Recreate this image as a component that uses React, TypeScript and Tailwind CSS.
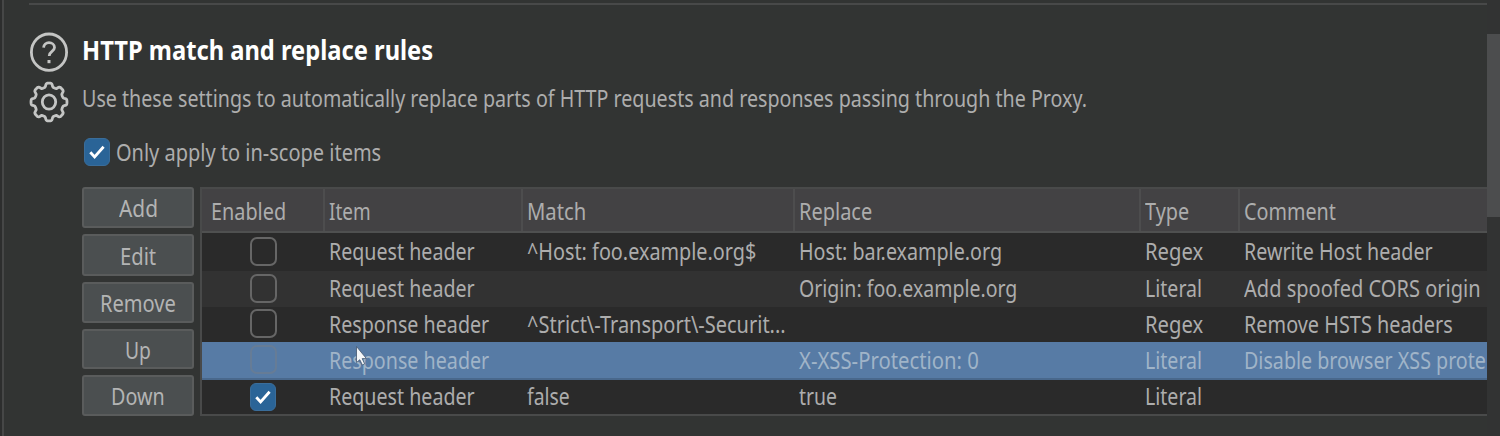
import { useLayoutEffect, useRef, useState } from "react";
import type { ReactNode } from "react";

/* A single line of text, condensed horizontally to a given width. */
function Fit({ children, w, className = "" }: { children: string; w: number; className?: string }) {
  const ref = useRef<HTMLSpanElement>(null);
  const [scale, setScale] = useState(1);
  useLayoutEffect(() => {
    if (ref.current) setScale(w / ref.current.offsetWidth);
  }, [w]);
  return (
    <span className="block whitespace-nowrap" style={{ width: w }}>
      <span
        ref={ref}
        className={"inline-block origin-left " + className}
        style={{ transform: `scaleX(${scale})` }}
      >
        {children}
      </span>
    </span>
  );
}

function Check({ state }: { state: "on" | "off" | "dim" }) {
  if (state === "on") {
    return (
      <span className="flex h-7 w-[26px] items-center justify-center rounded-md border border-[#3a6d9a] bg-[#2a6497]">
        <svg width="18" height="18" viewBox="0 0 18 18" fill="none" stroke="#fff" strokeWidth="2.8">
          <path d="M2.3 9.3 6.6 14 15.6 3.8" />
        </svg>
      </span>
    );
  }
  return (
    <span
      className={
        "block h-[29px] w-[27px] rounded-[7px] border-2 " +
        (state === "dim" ? "border-[#667c96]" : "border-[#666666]")
      }
    />
  );
}

/* Outline of an eight-toothed gear centred on (20, 21). */
const gearPath =
  "M" +
  Array.from({ length: 160 }, (_, i) => {
    const a = (i / 160) * Math.PI * 2;
    const r = 16.2 + 1.8 * Math.tanh(2.4 * Math.cos(8 * a) + 0.2);
    return `${(20 + r * Math.cos(a)).toFixed(2)} ${(21 + r * 1.05 * Math.sin(a)).toFixed(2)}`;
  }).join("L") +
  "Z";

type Cell = [string, number] | null;

const columns: [string, number][] = [
  ["Item", 42],
  ["Match", 59],
  ["Replace", 73],
  ["Type", 44],
  ["Comment", 92],
];

const rows: { state: "on" | "off" | "dim"; look: string; pad: string; cells: Cell[] }[] = [
  {
    state: "off",
    look: "h-[38px] bg-[#2a2a2a]",
    pad: "pb-0.5",
    cells: [["Request header", 146], ["^Host: foo.example.org$", 229], ["Host: bar.example.org", 203], ["Regex", 58], ["Rewrite Host header", 189]],
  },
  {
    state: "off",
    look: "h-9 bg-[#323232]",
    pad: "pb-[3px]",
    cells: [["Request header", 146], null, ["Origin: foo.example.org", 218], ["Literal", 57], ["Add spoofed CORS origin", 237]],
  },
  {
    state: "off",
    look: "h-[35px] bg-[#2a2a2a]",
    pad: "pb-0.5",
    cells: [["Response header", 160], ["^Strict\\-Transport\\-Securit...", 259], null, ["Regex", 58], ["Remove HSTS headers", 209]],
  },
  {
    state: "dim",
    look: "h-[38px] border-b-2 border-[#49688c] bg-[#577ba5] text-[#a0b4c8]",
    pad: "",
    cells: [["Response header", 160], null, ["X-XSS-Protection: 0", 180], ["Literal", 57], ["Disable browser XSS prote", 242]],
  },
  {
    state: "on",
    look: "h-[34px] bg-[#2a2a2a]",
    pad: "pb-[3px]",
    cells: [["Request header", 146], ["false", 43], ["true", 38], ["Literal", 57], null],
  },
];

const buttons: [string, number, string][] = [
  ["Add", 39, "h-[41px]"],
  ["Edit", 36, "h-[42px]"],
  ["Remove", 76, "h-[41px]"],
  ["Up", 26, "h-10"],
  ["Down", 54, "h-[41px]"],
];

const grid = "grid grid-cols-[123px_198px_272px_346px_99px_247px]";

function Icon({ children }: { children: ReactNode }) {
  return (
    <svg width="40" height="42" viewBox="0 0 40 42" fill="none" stroke="#c4c5c4" strokeWidth="2.8" strokeLinejoin="round">
      {children}
    </svg>
  );
}

export default function App() {
  return (
    <div className="relative flex h-[436px] w-[1500px] overflow-hidden bg-[#323433] font-['Noto_Sans',sans-serif] text-[23px] leading-[32px] text-[#adadad]">
      <div className="w-1 shrink-0 border-r-2 border-[#464747] bg-[#2d2e2e]" />
      <main className="w-[1483px] shrink-0 pl-[25px] pt-[3px]">
        <div className="h-0.5 bg-[#484949]" />
        <section className="flex pt-[25px]">
          <div className="flex w-[53px] shrink-0 flex-col gap-2 pt-px">
            <Icon>
              <ellipse cx="20" cy="21.2" rx="17.6" ry="18.2" />
              <path d="M14.6 16.6c.2-3 2.5-4.9 5.4-4.9s5.5 1.9 5.5 4.8c0 4-5.3 3.8-5.3 8.4" />
              <path d="M20 29v3.2" strokeWidth="3" />
            </Icon>
            <Icon>
              <path d={gearPath} />
              <ellipse cx="20" cy="21" rx="6.7" ry="7.2" />
            </Icon>
          </div>
          <div className="w-[1405px] shrink-0">
            <h1 className="mt-1 text-[26px] leading-[32px] font-bold text-white">
              <Fit w={351}>HTTP match and replace rules</Fit>
            </h1>
            <p className="mt-4">
              <Fit w={1005}>
                Use these settings to automatically replace parts of HTTP requests and responses passing through the Proxy.
              </Fit>
            </p>
            <label className="mt-[22px] flex items-center gap-1.5 pl-0.5">
              <Check state="on" />
              <Fit w={265}>Only apply to in-scope items</Fit>
            </label>
            <div className="mt-[19px] flex items-start gap-1.5">
              <div className="flex w-28 shrink-0 flex-col gap-1.5">
                {buttons.map(([label, w, h]) => (
                  <button
                    key={label}
                    className={"flex items-center justify-center rounded-[3px] border-2 border-[#5a5c5c] bg-[#4b4f50] pt-px text-[#b3b4b4] " + h}
                  >
                    <Fit w={w}>{label}</Fit>
                  </button>
                ))}
              </div>
              <div className="h-[229px] w-[1287px] shrink-0 border-y-2 border-l-2 border-[#494a4a]">
                <div className={"h-11 border-b-2 border-[#4f5050] bg-[#434244] " + grid}>
                  <div className="flex items-center border-r-2 border-[#4d4d4e] pl-[9px] pt-0.5">
                    <Fit w={75}>Enabled</Fit>
                  </div>
                  {columns.map(([label, w], i) => (
                    <div
                      key={label}
                      className={"flex items-center pl-1 pt-0.5 " + (i < 4 ? "border-r-2 border-[#4d4d4e]" : "")}
                    >
                      <Fit w={w}>{label}</Fit>
                    </div>
                  ))}
                </div>
                {rows.map((row, r) => (
                  <div key={r} className={"items-center " + grid + " " + row.look}>
                    <div className="flex justify-center pr-px pb-0.5">
                      <Check state={row.state} />
                    </div>
                    {row.cells.map((cell, c) => (
                      <div key={c} className={"min-w-0 pl-1 " + row.pad}>
                        {cell && <Fit w={cell[1]}>{cell[0]}</Fit>}
                      </div>
                    ))}
                  </div>
                ))}
              </div>
            </div>
          </div>
        </section>
      </main>
      <div className="w-[13px] shrink-0 bg-[#323333] pt-[34px]">
        <div className="h-[183px] bg-[#4c4d4e]" />
      </div>
      <svg className="absolute left-[354px] top-[344px]" width="16" height="24" viewBox="0 0 16 24">
        <path d="M2.5 2.5v16l3.3-2.8 2.6 5.3 2.2-1.2-2.4-5.2h4.2Z" fill="#f4f6f8" stroke="#42566e" strokeWidth="0.8" />
      </svg>
    </div>
  );
}
